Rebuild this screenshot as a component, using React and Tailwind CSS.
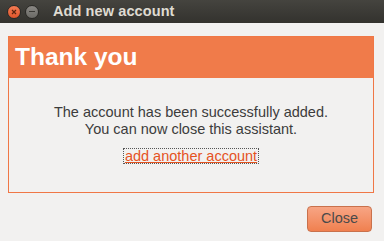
export default function App() {
  return (
    <div className="w-[384px] h-[241px] bg-[#f2f1f0] flex flex-col overflow-hidden" style={{ fontFamily: '"Liberation Sans", "DejaVu Sans", sans-serif' }}>
      <div className="h-[23px] flex items-center bg-gradient-to-b from-[#45443f] to-[#33322e]">
        <div className="ml-[7px] w-[14px] h-[14px] rounded-full bg-gradient-to-b from-[#f37b53] to-[#e0552a] flex items-center justify-center border border-[#2a2926]">
          <svg width="6" height="6" viewBox="0 0 6 6"><path d="M1 1L5 5M5 1L1 5" stroke="#5a2410" strokeWidth="1.2" /></svg>
        </div>
        <div className="ml-[4px] w-[14px] h-[14px] rounded-full bg-gradient-to-b from-[#8a8884] to-[#6b6a66] flex items-center justify-center border border-[#2a2926]">
          <div className="w-[6px] h-[1.5px] bg-[#3a3935]" />
        </div>
        <div className="ml-[14px] text-[14.5px] font-bold text-[#dfdbd2] tracking-[0.1px]">Add new account</div>
      </div>
      <div className="mx-[8px] mt-[13px] h-[157px] w-[366px] border border-[#f07746] flex flex-col">
        <div className="h-[41px] bg-[#f07b4a] flex items-center pl-[6px]">
          <span className="text-[24.5px] font-bold text-white leading-none">Thank you</span>
        </div>
        <div className="flex flex-col items-center pt-[26px] text-[14.5px] leading-[17px] text-[#3c3c3c]">
          <div>The account has been successfully added.</div>
          <div>You can now close this assistant.</div>
          <div className="mt-[10px] border border-dotted border-[#555] px-[1px] leading-[14px] text-[14.5px] text-[#e5531f] underline">add another account</div>
        </div>
      </div>
      <div className="flex justify-end pr-[12px] mt-[13px]">
        <div className="w-[65px] h-[26px] rounded-[4px] border border-[#c9714c] bg-gradient-to-b from-[#f7a584] to-[#f0804f] flex items-center justify-center text-[14.5px] text-[#4a4a4a]">Close</div>
      </div>
    </div>
  );
}
